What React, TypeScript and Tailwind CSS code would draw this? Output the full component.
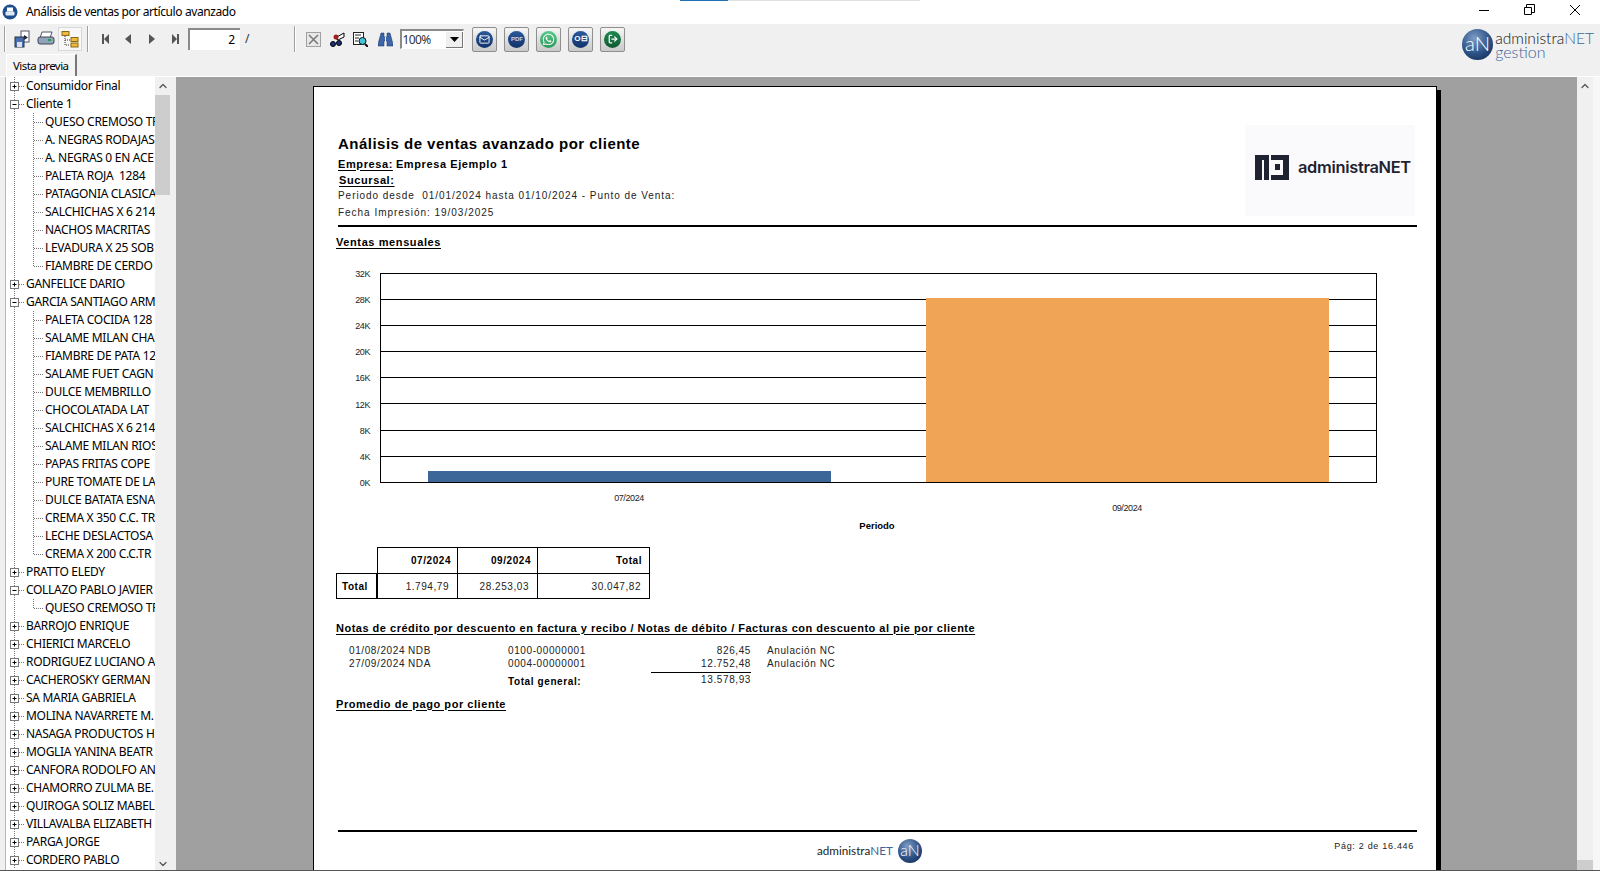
import { FaWhatsapp } from "react-icons/fa";
import { ChevronDown, ChevronUp, LogOut, Mail } from "lucide-react";

type TreeItem = { label: string; kind: "plus" | "minus" | "child" | "lastChild" };

const treeItems: TreeItem[] = [
  { label: "Consumidor Final", kind: "plus" },
  { label: "Cliente 1", kind: "minus" },
  { label: "QUESO CREMOSO TRO", kind: "child" },
  { label: "A. NEGRAS RODAJAS", kind: "child" },
  { label: "A. NEGRAS 0 EN ACE", kind: "child" },
  { label: "PALETA ROJA  1284", kind: "child" },
  { label: "PATAGONIA CLASICA", kind: "child" },
  { label: "SALCHICHAS X 6 214", kind: "child" },
  { label: "NACHOS MACRITAS", kind: "child" },
  { label: "LEVADURA X 25 SOB", kind: "child" },
  { label: "FIAMBRE DE CERDO", kind: "lastChild" },
  { label: "GANFELICE DARIO", kind: "plus" },
  { label: "GARCIA SANTIAGO ARM", kind: "minus" },
  { label: "PALETA COCIDA 128", kind: "child" },
  { label: "SALAME MILAN CHA", kind: "child" },
  { label: "FIAMBRE DE PATA 12", kind: "child" },
  { label: "SALAME FUET CAGN", kind: "child" },
  { label: "DULCE MEMBRILLO", kind: "child" },
  { label: "CHOCOLATADA LAT", kind: "child" },
  { label: "SALCHICHAS X 6 214", kind: "child" },
  { label: "SALAME MILAN RIOS", kind: "child" },
  { label: "PAPAS FRITAS COPE", kind: "child" },
  { label: "PURE TOMATE DE LA", kind: "child" },
  { label: "DULCE BATATA ESNA", kind: "child" },
  { label: "CREMA X 350 C.C. TR", kind: "child" },
  { label: "LECHE DESLACTOSA", kind: "child" },
  { label: "CREMA X 200 C.C.TR", kind: "lastChild" },
  { label: "PRATTO ELEDY", kind: "plus" },
  { label: "COLLAZO PABLO JAVIER", kind: "minus" },
  { label: "QUESO CREMOSO TRO", kind: "lastChild" },
  { label: "BARROJO ENRIQUE", kind: "plus" },
  { label: "CHIERICI MARCELO", kind: "plus" },
  { label: "RODRIGUEZ LUCIANO A", kind: "plus" },
  { label: "CACHEROSKY GERMAN", kind: "plus" },
  { label: "SA MARIA GABRIELA", kind: "plus" },
  { label: "MOLINA NAVARRETE M.", kind: "plus" },
  { label: "NASAGA PRODUCTOS H", kind: "plus" },
  { label: "MOGLIA YANINA BEATR", kind: "plus" },
  { label: "CANFORA RODOLFO AN", kind: "plus" },
  { label: "CHAMORRO ZULMA BE.", kind: "plus" },
  { label: "QUIROGA SOLIZ MABEL", kind: "plus" },
  { label: "VILLAVALBA ELIZABETH", kind: "plus" },
  { label: "PARGA JORGE", kind: "plus" },
  { label: "CORDERO PABLO", kind: "plus" },
];

const gridLines = [273.5, 299.5, 325.5, 351.5, 377.5, 403.5, 430.5, 456.5];
const axisLabels = ["32K", "28K", "24K", "20K", "16K", "12K", "8K", "4K", "0K"];

function TreeRow({ item }: { item: TreeItem }) {
  const isChild = item.kind === "child" || item.kind === "lastChild";
  return (
    <div className="flex h-[18px] items-center overflow-hidden whitespace-pre">
      <svg width={isChild ? 39 : 20} height={18} className="shrink-0">
        <path d="M8.5 0V18" stroke="#777" strokeDasharray="1 1" />
        {isChild ? (
          <>
            <path d={item.kind === "lastChild" ? "M27.5 0V9" : "M27.5 0V18"} stroke="#777" strokeDasharray="1 1" />
            <path d="M28 9.5H38" stroke="#777" strokeDasharray="1 1" />
          </>
        ) : (
          <>
            <path d="M13 9.5H19" stroke="#777" strokeDasharray="1 1" />
            <rect x="4.5" y="5.5" width="8" height="8" fill="#fff" stroke="#777" />
            <path d="M6.5 9.5H10.5" stroke="#000" />
            {item.kind === "plus" && <path d="M8.5 7.5V11.5" stroke="#000" />}
          </>
        )}
      </svg>
      <span className="text-[12px] text-black font-['Noto_Sans',sans-serif] tracking-[-0.3px]">{item.label}</span>
    </div>
  );
}

function ToolSeparator() {
  return <div className="h-[26px] w-[2px] shrink-0 border-l border-r border-l-[#a0a0a0] border-r-white" />;
}

function RoundButton({ from, to, children }: { from: string; to: string; children: React.ReactNode }) {
  return (
    <div className="flex h-[25px] w-[25px] items-center justify-center rounded-[2px] border border-[#8f8f8f] bg-gradient-to-b from-[#f6f6f6] to-[#c9c9c9]">
      <div className={`flex h-[17px] w-[17px] items-center justify-center rounded-full bg-gradient-to-b text-white ${from} ${to}`}>
        {children}
      </div>
    </div>
  );
}

function BrandCircle({ size }: { size: number }) {
  return (
    <svg width={size} height={size} viewBox="0 0 32 32" className="shrink-0">
      <defs>
        <radialGradient id="brand" cx="0.4" cy="0.3" r="0.8">
          <stop offset="0" stopColor="#7f9cc4" />
          <stop offset="0.6" stopColor="#2f5488" />
          <stop offset="1" stopColor="#142f58" />
        </radialGradient>
      </defs>
      <circle cx="16" cy="16" r="16" fill="url(#brand)" />
      <text x="16" y="23" textAnchor="middle" fontSize="21" fontFamily="Lato, sans-serif" fontWeight="300" fill="#fff">
        aN
      </text>
    </svg>
  );
}

function Heading({ children, className = "" }: { children: React.ReactNode; className?: string }) {
  return (
    <div className={`flex h-4 items-center text-[11px] font-bold underline underline-offset-2 ${className}`}>
      {children}
    </div>
  );
}

function SalesChart() {
  return (
    <svg width={1082} height={290} viewBox="336 250 1082 290" className="block">
      {gridLines.map((y) => (
        <path key={y} d={`M380 ${y}H1376`} stroke="#000" />
      ))}
      <rect x="380.5" y="273.5" width="996" height="209" fill="none" stroke="#000" />
      <rect x="428" y="471" width="403" height="11" fill="#3c6698" />
      <rect x="926" y="298" width="403" height="184" fill="#f0a455" />
      <g fontSize="9" fill="#222" letterSpacing="-0.4" fontFamily="'Liberation Sans', sans-serif">
        {axisLabels.map((label, i) => (
          <text key={label} x="370" y={277 + i * 26.1} textAnchor="end">
            {label}
          </text>
        ))}
        <text x="629" y="501" textAnchor="middle">07/2024</text>
        <text x="1127" y="511" textAnchor="middle">09/2024</text>
      </g>
      <text x="877" y="529" textAnchor="middle" fontSize="9.5" fontWeight="700" fontFamily="'Liberation Sans', sans-serif">
        Periodo
      </text>
    </svg>
  );
}

function SalesTable() {
  const head = "flex items-center justify-end font-bold border-black";
  const cell = "flex items-center justify-end pr-[8px] border-black text-[#222]";
  return (
    <div className="mt-[7px] grid w-[314px] grid-cols-[41px_80px_80px_113px] grid-rows-[26px_26px] text-[10px] tracking-[0.55px]">
      <div />
      <div className={`${head} border-t border-l pr-[6px]`}>07/2024</div>
      <div className={`${head} border-t border-l pr-[6px]`}>09/2024</div>
      <div className={`${head} border-t border-l border-r pr-[7px]`}>Total</div>
      <div className="flex items-center border border-black pl-[5px] font-bold">Total</div>
      <div className={`${cell} border-t border-l border-b`}>1.794,79</div>
      <div className={`${cell} border-t border-l border-b`}>28.253,03</div>
      <div className={`${cell} border border-black`}>30.047,82</div>
    </div>
  );
}

function NoteRow({ date, type, number, amount }: { date: string; type: string; number: string; amount: string }) {
  return (
    <div className="flex h-[13px] items-center text-[10px] tracking-[0.6px] text-[#222]">
      <span className="ml-[13px] w-[59px]">{date}</span>
      <span className="w-[100px]">{type}</span>
      <span className="w-[150px]">{number}</span>
      <span className="w-[93px] text-right">{amount}</span>
      <span className="ml-[16px]">Anulación NC</span>
    </div>
  );
}

function ReportPage() {
  return (
    <div className="mt-[9px] ml-[137px] h-[900px] w-[1124px] border border-black bg-white pr-[19px] pl-[22px] text-black shadow-[4px_4px_0_#000] font-['Liberation_Sans',sans-serif]">
      <div className="mt-[38px] flex h-[100px] items-start justify-between">
        <div className="ml-[2px] flex flex-col">
          <div className="mt-[8px] flex h-[22px] items-center text-[15px] font-bold tracking-[0.48px]">
            Análisis de ventas avanzado por cliente
          </div>
          <div className="mt-[1px] flex h-4 items-center text-[11px] font-bold tracking-[0.6px]">
            <span className="underline underline-offset-2">Empresa:</span>
            <span className="ml-[3px]">Empresa Ejemplo 1</span>
          </div>
          <div className="flex h-4 items-center text-[11px] font-bold tracking-[0.6px]">
            <span className="ml-[1px] underline underline-offset-2">Sucursal:</span>
          </div>
          <div className="mt-[-1px] flex h-4 items-center whitespace-pre text-[10px] tracking-[0.95px] text-[#222]">
            Periodo desde  01/01/2024 hasta 01/10/2024 - Punto de Venta:
          </div>
          <div className="mt-[1px] flex h-4 items-center text-[10px] tracking-[0.97px] text-[#222]">
            Fecha Impresión: 19/03/2025
          </div>
        </div>
        <div className="mr-[2px] flex h-[91px] w-[170px] items-center gap-[9px] bg-[#fafafc] pl-[10px] text-[#1f2230]">
          <svg width={34} height={25} viewBox="0 0 34 25" className="mt-[-6px] shrink-0">
            <path fill="#1f2230" d="M0 0H14V25H9V5H7V25H0ZM16 0H34V25H16V20H28V5H16Z" />
            <rect x="20" y="9" width="5" height="6" fill="#1f2230" />
          </svg>
          <span className="mt-[-6px] text-[16.4px] font-semibold font-['Inter',sans-serif] tracking-[-0.3px]">administraNET</span>
        </div>
      </div>
      <div className="ml-[2px] h-[2px] bg-black" />
      <Heading className="mt-[7px] tracking-[0.6px]">Ventas mensuales</Heading>
      <SalesChart />
      <SalesTable />
      <Heading className="mt-[21px] tracking-[0.5px]">
        Notas de crédito por descuento en factura y recibo / Notas de débito / Facturas con descuento al pie por cliente
      </Heading>
      <div className="mt-[8px]">
        <NoteRow date="01/08/2024" type="NDB" number="0100-00000001" amount="826,45" />
        <NoteRow date="27/09/2024" type="NDA" number="0004-00000001" amount="12.752,48" />
        <div className="mt-[2px] ml-[315px] h-px w-[100px] bg-black" />
        <div className="flex h-4 items-center text-[10px] tracking-[0.6px]">
          <span className="ml-[172px] w-[150px] font-bold">Total general:</span>
          <span className="mt-[-3px] w-[93px] text-right text-[#222]">13.578,93</span>
        </div>
      </div>
      <Heading className="mt-[7px] tracking-[0.55px]">Promedio de pago por cliente</Heading>
      <div className="mt-[118px] ml-[2px] h-[2px] bg-black" />
      <div className="flex h-[34px] items-center">
        <div className="mt-[4px] ml-[481px] flex items-center gap-[5px]">
          <span className="text-[11.7px] text-[#222] font-['Lato',sans-serif]">
            administra<span className="text-[#3c6698]">NET</span>
          </span>
          <BrandCircle size={24} />
        </div>
        <span className="mt-[-4px] mr-[3px] ml-auto text-[9px] tracking-[0.7px] text-[#222]">Pág: 2 de 16.446</span>
      </div>
    </div>
  );
}

export default function App() {
  return (
    <div className="flex h-[871px] w-[1600px] flex-col overflow-hidden bg-white font-['Noto_Sans',sans-serif]">
      {/* Title bar */}
      <div className="relative flex h-6 shrink-0 items-center">
        <div className="absolute top-0 left-[680px] h-px w-[240px] bg-[#e0e0e0]">
          <div className="h-px w-12 bg-[#1f6fb5]" />
        </div>
        <svg width={16} height={16} viewBox="0 0 16 16" className="ml-[2px] shrink-0">
          <circle cx="8" cy="8" r="7.5" fill="#1f4e8c" />
          <rect x="5" y="3.5" width="6" height="4" fill="#fff" />
          <rect x="3.5" y="7.5" width="9" height="4" rx="1" fill="#dfe8f3" />
        </svg>
        <span className="ml-2 text-[12px] tracking-[-0.4px] text-black">Análisis de ventas por artículo avanzado</span>
        <svg width={110} height={24} viewBox="0 0 110 24" className="mr-[12px] ml-auto">
          <path d="M1 10.5H11" stroke="#000" />
          <path d="M48.5 7.5V4.5H56.5V12.5H53.5M46.5 7.5H53.5V14.5H46.5Z" fill="none" stroke="#000" />
          <path d="M92 5L102 15M102 5L92 15" stroke="#000" />
        </svg>
      </div>

      {/* Toolbar */}
      <div className="flex h-[52px] shrink-0 bg-[#f0f0f0]">
        <div className="flex flex-col">
          <div className="flex h-[30px] items-center pl-[4px]">
            <ToolSeparator />
            <svg width={18} height={18} viewBox="0 0 18 18" className="ml-[8px]">
              <rect x="7" y="1" width="8" height="11" fill="#fff" stroke="#556" />
              <path d="M10 5L14 7.5L10 10Z" fill="#223" />
              <rect x="1" y="7" width="9" height="10" fill="#4a6fb0" stroke="#234" />
              <rect x="3" y="12" width="5" height="5" fill="#dde" />
            </svg>
            <svg width={18} height={18} viewBox="0 0 18 18" className="ml-[5px]">
              <path d="M5 2H15L13 8H3Z" fill="#fff" stroke="#556" />
              <rect x="1" y="7" width="16" height="7" rx="2" fill="#8fa3bb" stroke="#445" />
              <rect x="11" y="9" width="3" height="2" fill="#2c9a58" />
            </svg>
            <div className="ml-[3px] flex h-[24px] w-[24px] items-center justify-center border border-[#d8d8d8] bg-[#f7f7f7]">
              <svg width={18} height={17} viewBox="0 0 18 17">
                <rect x="1" y="0.5" width="7" height="4" fill="#f0b83c" stroke="#8a6a10" />
                <path d="M4 5V14H9M4 9H9" fill="none" stroke="#333" strokeDasharray="1 1" />
                <rect x="10" y="6.5" width="7" height="4" fill="#f0b83c" stroke="#8a6a10" />
                <rect x="10" y="12" width="7" height="4" fill="#f0b83c" stroke="#8a6a10" />
              </svg>
            </div>
            <div className="ml-[5px]">
              <ToolSeparator />
            </div>
            <svg width={83} height={12} viewBox="0 0 83 12" className="ml-[13px]" fill="#555">
              <path d="M0 1H2V11H0ZM7 1V11L2 6Z" />
              <path d="M29 1V11L23 6Z" />
              <path d="M47 1L53 6L47 11Z" />
              <path d="M70 1L75 6L70 11ZM75 1H77V11H75Z" />
            </svg>
            <div className="ml-[3px] flex h-[22px] w-[52px] items-center justify-end border-t-2 border-l-2 border-t-[#8a8a8a] border-l-[#8a8a8a] bg-white pr-[5px] text-[12px]">
              2
            </div>
            <span className="ml-[5px] text-[12px] text-[#333]">/</span>
            <div className="ml-[45px]">
              <ToolSeparator />
            </div>
            <svg width={15} height={15} viewBox="0 0 15 15" className="ml-[10px]">
              <rect x="0.5" y="0.5" width="14" height="14" fill="#e8e8e8" stroke="#a0a0a0" />
              <path d="M3 3L12 12M12 3L3 12" stroke="#777" strokeWidth="1.5" />
            </svg>
            <svg width={17} height={15} viewBox="0 0 17 15" className="ml-[8px]">
              <path d="M6 6L15 1V5L9 8Z" fill="#fff" stroke="#000" />
              <circle cx="7" cy="5" r="2.5" fill="#a02020" />
              <circle cx="4" cy="12" r="2.5" fill="#1a2f7a" stroke="#000" />
              <circle cx="10" cy="11" r="2.5" fill="#1a2f7a" stroke="#000" />
            </svg>
            <svg width={15} height={15} viewBox="0 0 15 15" className="ml-[7px]">
              <rect x="0.5" y="0.5" width="10" height="12" fill="#fff" stroke="#222" />
              <path d="M2 3H8M2 6H6M2 9H5" stroke="#222" />
              <circle cx="9.5" cy="9" r="3.5" fill="#45c4d8" stroke="#111" />
              <path d="M12 12L15 15" stroke="#111" strokeWidth="2" />
            </svg>
            <svg width={15} height={15} viewBox="0 0 15 15" className="ml-[10px]">
              <path d="M3 1H6V5H9V1H12L15 12V14H9V9H6V14H0V12Z" fill="#3c66a8" stroke="#1a2f60" strokeWidth="0.5" />
              <path d="M7.5 5V14" stroke="#f0f0f0" />
            </svg>
            <div className="ml-[7px] flex h-[20px] w-[64px] items-center justify-between border border-t-2 border-l-2 border-[#8a8a8a] border-r-white border-b-white bg-white text-[12px] tracking-[-0.6px] text-[#333]">
              100%
              <div className="flex h-[16px] w-[17px] items-center justify-center border-r border-b border-r-[#777] border-b-[#777] bg-[#efefef]">
                <svg width={9} height={5} viewBox="0 0 9 5">
                  <path d="M0 0H9L4.5 5Z" fill="#000" />
                </svg>
              </div>
            </div>
            <div className="ml-[8px] flex gap-[7px]">
              <RoundButton from="from-[#2a5a9c]" to="to-[#12326a]">
                <Mail size={11} strokeWidth={2} />
              </RoundButton>
              <RoundButton from="from-[#2a5a9c]" to="to-[#12326a]">
                <span className="text-[6px] font-bold leading-none text-[#c8d6ea] font-['Liberation_Sans',sans-serif]">PDF</span>
              </RoundButton>
              <RoundButton from="from-[#5cc98a]" to="to-[#2b9a5c]">
                <FaWhatsapp size={13} />
              </RoundButton>
              <RoundButton from="from-[#2a5a9c]" to="to-[#12326a]">
                <span className="text-[8px] font-bold leading-none font-['Liberation_Sans',sans-serif]">O⊟</span>
              </RoundButton>
              <RoundButton from="from-[#1f8a50]" to="to-[#0e5a30]">
                <LogOut size={10} strokeWidth={3} />
              </RoundButton>
            </div>
          </div>
          <div className="flex flex-1 items-end pl-[6px]">
            <div className="flex h-[22px] w-[71px] items-center whitespace-nowrap border-t border-r-2 border-l border-t-white border-r-[#777] border-l-white bg-[#f5f5f5] pl-[6px] text-[11.5px] tracking-[-0.55px] text-black">
              Vista previa
            </div>
          </div>
        </div>
        <div className="ml-auto flex items-start pt-[5px] pr-[6px]">
          <div className="mr-[-1px] ml-[3px]">
            <BrandCircle size={31} />
          </div>
          <div className="ml-[3px] flex flex-col font-['Lato',sans-serif] font-light">
            <span className="mt-[2px] text-[15.6px] leading-[14px] text-[#111]">
              administra<span className="text-[#3c6698]">NET</span>
            </span>
            <span className="text-[16px] leading-[14px] text-[#3c6698]">gestion</span>
          </div>
        </div>
      </div>
      <div className="h-px shrink-0 bg-white" />

      {/* Body */}
      <div className="flex min-h-0 flex-1">
        <div className="flex w-[176px] shrink-0 bg-[#f0f0f0] pl-[5px]">
          <div className="h-full w-[150px] overflow-hidden border-l border-[#b8b8b8] bg-white">
            {treeItems.map((item, i) => (
              <TreeRow key={i} item={item} />
            ))}
          </div>
          <div className="flex h-full w-[15px] flex-col items-center justify-between bg-[#f0f0f0]">
            <div className="flex w-full flex-col items-center">
              <ChevronUp size={12} strokeWidth={2.5} className="my-[3px] text-[#555]" />
              <div className="h-[100px] w-full bg-[#cdcdcd]" />
            </div>
            <ChevronDown size={12} strokeWidth={2.5} className="text-[#555]" />
          </div>
        </div>
        <div className="min-w-0 flex-1 overflow-hidden bg-[#a0a0a0]">
          <ReportPage />
        </div>
        <div className="flex w-[23px] shrink-0 bg-[#f7f7f7]">
          <div className="flex h-full w-4 flex-col items-center justify-between bg-[#f0f0f0]">
            <ChevronUp size={12} strokeWidth={2.5} className="mt-[3px] text-[#555]" />
            <div className="h-[10px] w-full bg-[#cdcdcd]" />
          </div>
        </div>
      </div>
      <div className="h-px shrink-0 bg-[#555]" />
    </div>
  );
}
